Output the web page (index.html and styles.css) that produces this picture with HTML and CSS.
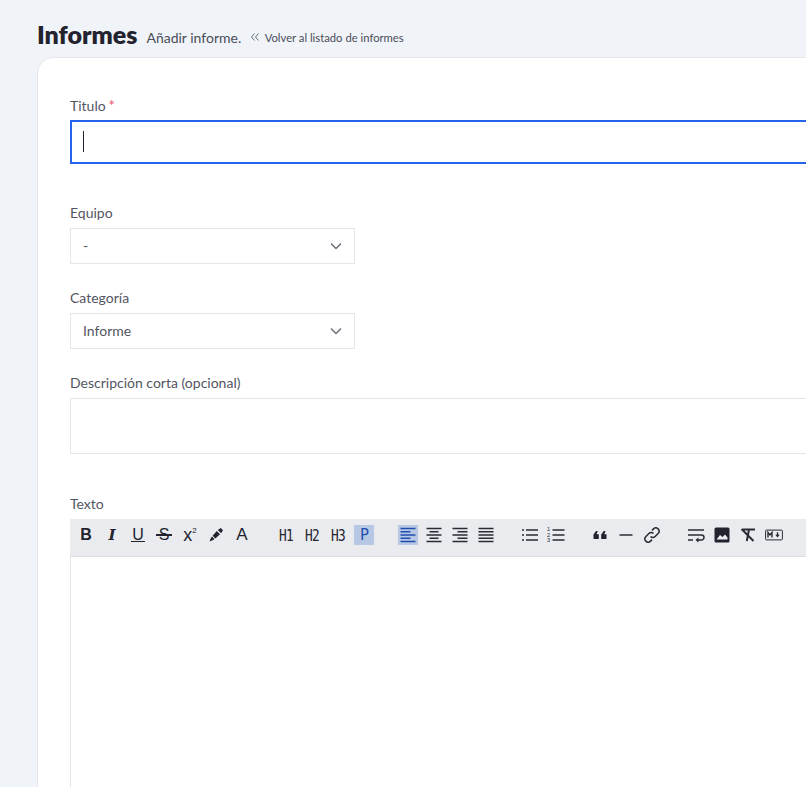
FILE: index.html
```html
<!DOCTYPE html>
<html lang="es">
<head>
    <meta charset="UTF-8">
    <meta name="viewport" content="width=device-width, initial-scale=1.0">
    <title>Informes</title>
    <link rel="stylesheet" href="styles.css">
</head>
<body>
    <header class="page-head">
        <h1>Informes</h1>
        <span class="subtitle">Añadir informe.</span>
        <a class="back-link" href="#">
            <svg class="back-icon" viewBox="0 0 10 10"><path d="M4.5 1.5 1.5 5l3 3.500M8.500 1.500 5.500 5l3 3.500"/></svg>
            Volver al listado de informes
        </a>
    </header>

    <main class="card">
        <label class="field-label">Titulo <span class="required">*</span></label>
        <div class="title-field">
            <input class="title-input" type="text">
            <span class="caret"></span>
        </div>

        <label class="field-label team-label">Equipo</label>
        <div class="select-wrap">
            <select class="select"><option>-</option></select>
            <svg class="chevron" viewBox="0 0 12 8"><path d="M1 1.500 6 6.500l5-5"/></svg>
        </div>

        <label class="field-label next-label">Categoría</label>
        <div class="select-wrap">
            <select class="select"><option>Informe</option></select>
            <svg class="chevron" viewBox="0 0 12 8"><path d="M1 1.500 6 6.500l5-5"/></svg>
        </div>

        <label class="field-label next-label">Descripción corta (opcional)</label>
        <textarea class="short-text"></textarea>

        <label class="field-label text-label">Texto</label>
        <div class="toolbar">
            <div class="tool-group">
                <button class="tool tool-b">B</button>
                <button class="tool tool-i">I</button>
                <button class="tool"><span class="tool-u">U</span></button>
                <button class="tool"><span class="tool-s">S</span></button>
                <button class="tool tool-x">x<sup>2</sup></button>
                <button class="tool">
                    <svg viewBox="0 0 16 16"><path class="fill" d="M8.800 4 12 7.200 7.400 11.400 4.600 8.800zM9.800 3l2.900-2 2.300 2.300-2 2.900zM4 9.600l2.400 2.400-1.200 1-3.700 1.500 1.400-3.600z"/></svg>
                </button>
                <button class="tool tool-a">A</button>
            </div>
            <div class="tool-group">
                <button class="tool tool-h">H1</button>
                <button class="tool tool-h">H2</button>
                <button class="tool tool-h">H3</button>
                <button class="tool tool-h active">P</button>
            </div>
            <div class="tool-group">
                <button class="tool active">
                    <svg viewBox="0 0 18 16"><path d="M1.500 1.500h15M1.500 4.800h10M1.500 8h15M1.500 11.200h10M1.500 14.500h15"/></svg>
                </button>
                <button class="tool">
                    <svg viewBox="0 0 18 16"><path d="M1.500 1.500h15M4.500 4.800h9M1.500 8h15M4.500 11.200h9M1.500 14.500h15"/></svg>
                </button>
                <button class="tool">
                    <svg viewBox="0 0 18 16"><path d="M1.500 1.500h15M6.500 4.800h10M1.500 8h15M6.500 11.200h10M1.500 14.500h15"/></svg>
                </button>
                <button class="tool">
                    <svg viewBox="0 0 18 16"><path d="M1.500 1.500h15M1.500 4.800h15M1.500 8h15M1.500 11.200h15M1.500 14.500h15"/></svg>
                </button>
            </div>
            <div class="tool-group">
                <button class="tool">
                    <svg viewBox="0 0 18 16"><path d="M5 3h12M5 8h12M5 13h12M1 3h2M1 8h2M1 13h2"/></svg>
                </button>
                <button class="tool tool-ol">
                    <svg viewBox="0 0 18 16"><path d="M5.500 3h12M5.500 8h12M5.500 13h12"/></svg>
                    <span class="ol-nums">1<br>2<br>3</span>
                </button>
            </div>
            <div class="tool-group">
                <button class="tool">
                    <svg viewBox="0 0 16 16"><path class="fill" d="M1.500 7.500 4 4h1.800L4.600 7.300H6.800V12H1.500zM9.200 7.500 11.700 4h1.800l-1.200 3.300h2.200V12H9.200z"/></svg>
                </button>
                <button class="tool">
                    <svg viewBox="0 0 16 16"><path d="M1.500 8h13"/></svg>
                </button>
                <button class="tool">
                    <svg viewBox="0 0 16 16"><path class="link" d="M6.500 9.500a3.200 3.200 0 0 0 4.600 0l3-3a3.200 3.200 0 0 0-4.600-4.600L8 3.400M9.500 6.500a3.200 3.200 0 0 0-4.600 0l-3 3a3.200 3.200 0 0 0 4.600 4.600L8 12.600"/></svg>
                </button>
            </div>
            <div class="tool-group">
                <button class="tool">
                    <svg viewBox="0 0 18 16"><path d="M1 3h16M1 8h13.500a2.500 2.500 0 0 1 0 5H10M1 13h5"/><path class="fill" d="M11.500 10.500v5l-3-2.500z"/></svg>
                </button>
                <button class="tool">
                    <svg viewBox="0 0 16 16"><path class="fill" fill-rule="evenodd" d="M2 .5h12A1.500 1.500 0 0 1 15.500 2v12a1.500 1.500 0 0 1-1.500 1.500H2A1.500 1.500 0 0 1 .5 14V2A1.500 1.500 0 0 1 2 .5zM2.500 12.500h11v-2L11 7.500 8.500 10 6 8z"/></svg>
                </button>
                <button class="tool">
                    <svg viewBox="0 0 16 16"><path class="bold" d="M3 2.500h12M9 2.500 6.800 14M1.500 2 13.500 14"/></svg>
                </button>
                <button class="tool">
                    <svg viewBox="0 0 18 12"><rect class="thin" x=".6" y="1.100" width="16.800" height="9.800" rx="1"/><path class="md" d="M3 8.500v-5l2 2.400 2-2.400v5M12.500 3.200v3"/><path class="fill" d="M10.300 5.800h4.400l-2.200 2.800z"/></svg>
                </button>
            </div>
        </div>
        <div class="editor"></div>
    </main>
</body>
</html>
```

FILE: styles.css
```css
html, body {
    height: 100%;
    overflow: hidden;
}

body {
    font-family: 'Lato', sans-serif;
    font-size: 14px;
    background: #f0f3f8;
    color: #4a4d59;
    margin: 0;
    padding: 0 0 0 37px;
}

.page-head {
    display: flex;
    align-items: flex-start;
    height: 57px;
    padding-top: 18px;
    box-sizing: border-box;
    white-space: nowrap;
}

h1 {
    font-size: 25px;
    line-height: 32px;
    font-weight: 800;
    color: #22232f;
    margin: 0 9px 0 0;
}

.subtitle {
    font-size: 14px;
    line-height: 32px;
    color: #4a4d59;
    margin: 4px 9px 0 0;
}

.back-link {
    font-size: 11.25px;
    line-height: 32px;
    color: #4a4d59;
    text-decoration: none;
    margin-top: 4px;
}

.back-icon {
    width: 10px;
    height: 10px;
    margin-right: 2px;
    fill: none;
    stroke: #666a75;
    stroke-width: 1;
}

.card {
    width: 1000px;
    height: 900px;
    background: white;
    border: 1px solid #e4e6ea;
    border-radius: 16px;
    padding: 38px 32px;
}

.field-label {
    display: block;
    line-height: 20px;
    color: #52555f;
    margin-bottom: 5px;
}

.title-field {
    position: relative;
}

.title-input {
    display: block;
    box-sizing: border-box;
    width: 100%;
    height: 44px;
    border: 2px solid #2563eb;
    border-radius: 0;
    outline: none;
    margin-top: -1px;
}

.caret {
    position: absolute;
    left: 13px;
    top: 11px;
    width: 1px;
    height: 21px;
    background: #22232f;
}

.required {
    color: #e8556d;
    font-size: 16px;
    line-height: 14px;
    margin-left: -1px;
}

.team-label {
    margin-top: 39px;
}

.next-label {
    margin-top: 24px;
}

.text-label {
    margin-top: 40px;
}

.select-wrap {
    position: relative;
    width: 285px;
}

.select {
    display: block;
    appearance: none;
    box-sizing: border-box;
    width: 100%;
    height: 36px;
    background: white;
    border: 1px solid #e4e6ea;
    border-radius: 0;
    padding: 0 12px 2px;
    font-family: inherit;
    font-size: 14px;
    color: #52555f;
}

.chevron {
    position: absolute;
    right: 13px;
    top: 14px;
    width: 12px;
    height: 8px;
    fill: none;
    stroke: #6b6f7a;
    stroke-width: 1.500;
}

.short-text {
    display: block;
    box-sizing: border-box;
    width: 100%;
    height: 56px;
    border: 1px solid #e4e6ea;
    resize: none;
}

.toolbar {
    display: flex;
    gap: 24px;
    height: 37px;
    padding: 6px 6px 0;
    box-sizing: border-box;
    background: #e9ebee;
}

.tool-group {
    display: flex;
    gap: 6px;
}

.tool {
    position: relative;
    display: flex;
    align-items: center;
    justify-content: center;
    width: 20px;
    height: 20px;
    padding: 0;
    border: none;
    background: transparent;
    color: #22232f;
    font-family: 'Liberation Sans', sans-serif;
    font-size: 16px;
}

.tool svg {
    width: 18px;
    height: 16px;
    fill: none;
    stroke: #2a2b35;
    stroke-width: 1.500;
}

.tool svg .fill {
    fill: #22232f;
    stroke: none;
}

.tool svg .thin {
    stroke-width: 1;
}

.tool svg .md {
    stroke-width: 1.400;
}

.tool svg .bold {
    stroke-width: 2;
}

.tool.active {
    background: #b8c8e4;
    color: #1e4fb0;
}

.tool.active svg {
    stroke: #1e4fb0;
}

.tool-b {
    font-weight: 700;
}

.tool-i {
    font-family: 'DejaVu Serif', serif;
    font-size: 15px;
    font-style: italic;
    font-weight: 700;
}

.tool-u {
    display: block;
    line-height: 13px;
    padding: 0 1px;
    border-bottom: 1.500px solid #22232f;
}

.tool-s {
    position: relative;
    display: block;
    line-height: 16px;
}

.tool-s::after {
    content: "";
    position: absolute;
    left: -3px;
    right: -3px;
    top: 7px;
    height: 1.500px;
    background: #22232f;
}

.tool-x {
    font-size: 18px;
}

.tool-x sup {
    font-size: 8px;
    line-height: 0;
    margin-top: -9px;
}

.tool-a {
    font-size: 17px;
}

.tool-h {
    font-family: 'DejaVu Sans Mono', monospace;
    font-size: 16px;
    letter-spacing: -1px;
    transform: scaleX(.8);
}

.tool-h.active {
    background: #b8c8e4;
    transform: none;
    font-size: 15px;
}

.ol-nums {
    position: absolute;
    left: 1px;
    top: 2px;
    font-size: 5.500px;
    line-height: 5.500px;
    text-align: left;
}

.editor {
    height: 500px;
    border: 1px solid #e4e6ea;
    border-top-color: #dcdee2;
}
```
